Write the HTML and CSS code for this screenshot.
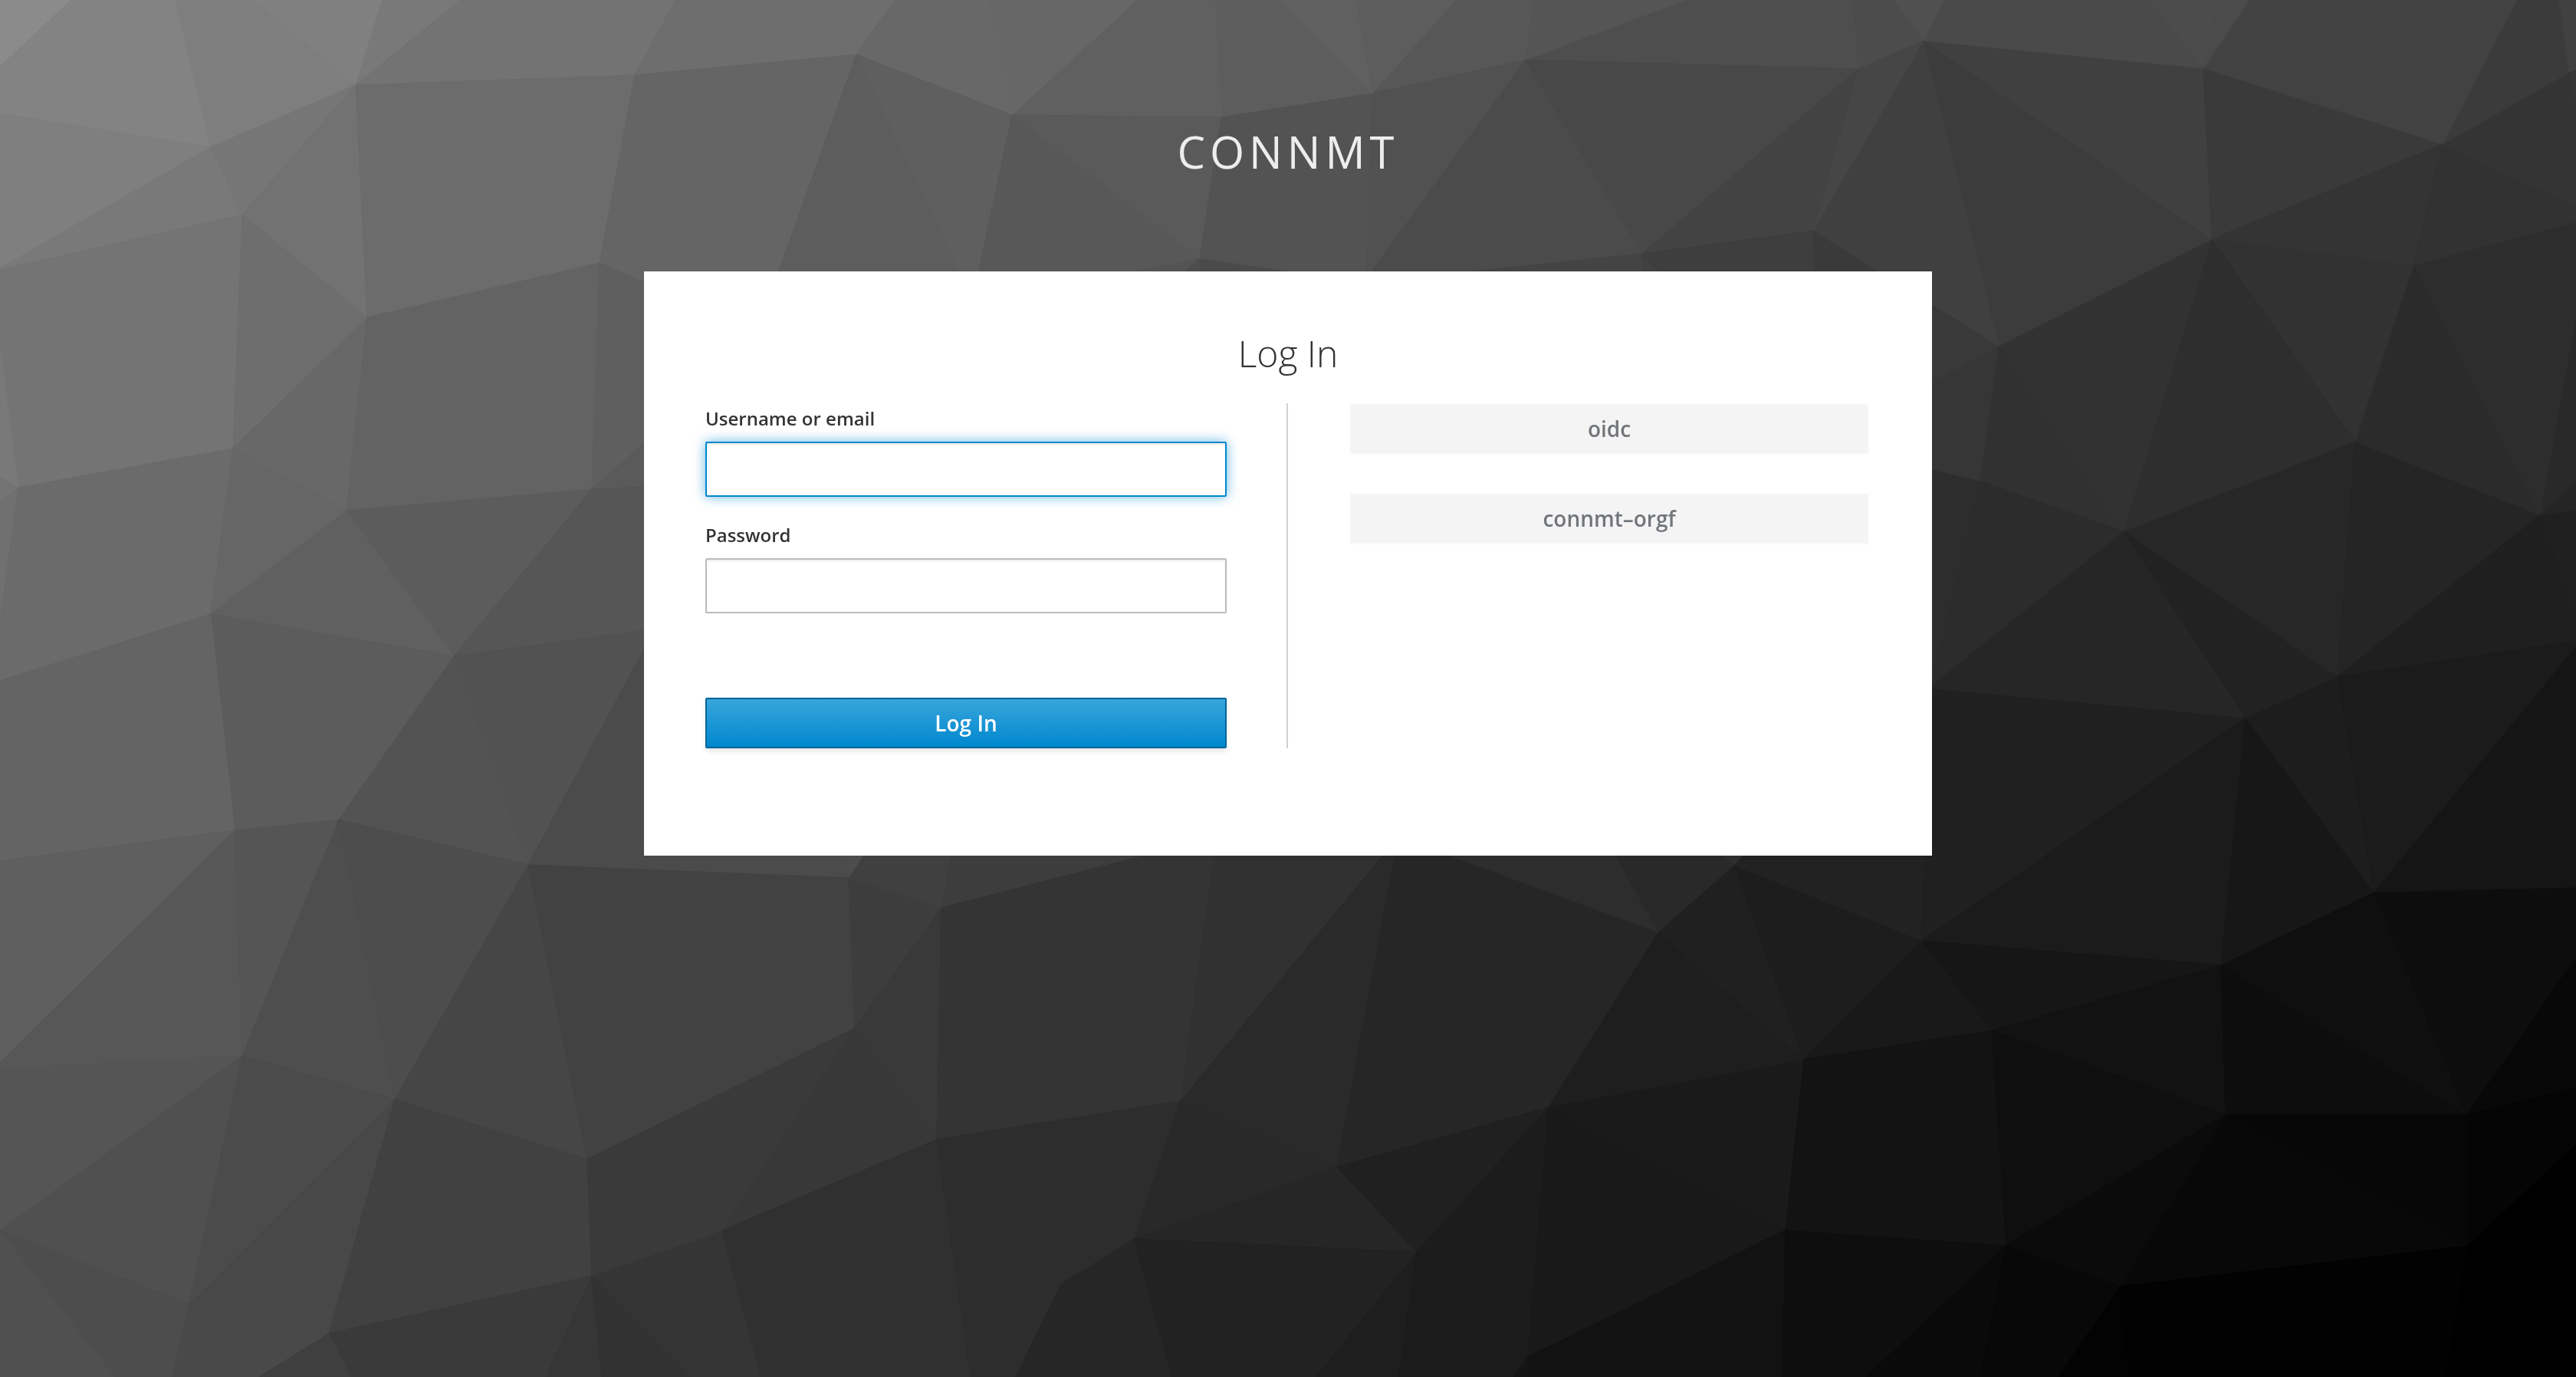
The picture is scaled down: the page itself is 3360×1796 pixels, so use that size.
FILE: index.html
```html
<!DOCTYPE html>
<html lang="en">
<head>
<meta charset="utf-8">
<meta name="viewport" content="width=device-width, initial-scale=1">
<title>Log in to CONNMT</title>
<link rel="stylesheet" href="styles.css">
</head>
<body>
<svg class="backdrop" viewBox="0 0 3360 1796" preserveAspectRatio="xMidYMid slice" aria-hidden="true"></svg>
<div class="page">
  <header class="brand">CONNMT</header>
  <main class="card">
    <h1 class="card-title">Log In</h1>
    <div class="columns">
      <form class="login" action="#" method="post">
        <div class="field">
          <label class="label" for="username">Username or email</label>
          <input class="input" id="username" name="username" type="text" autocomplete="off">
        </div>
        <div class="field">
          <label class="label" for="password">Password</label>
          <input class="input" id="password" name="password" type="password" autocomplete="off">
        </div>
        <button class="submit" type="submit">Log In</button>
      </form>
      <ul class="providers">
        <li><a class="provider" href="#oidc">oidc</a></li>
        <li><a class="provider" href="#connmt-orgf">connmt–orgf</a></li>
      </ul>
    </div>
  </main>
</div>
<script src="backdrop.js"></script>
</body>
</html>
```
FILE: backdrop.js
```js
// Low-poly backdrop: each facet is a grey level followed by its corner points.
const facets = `
8b 0,0 93,0 0,87
83 93,0 229,0 275,192 0,148 0,87
7e 229,0 330,0 464,111 275,192
80 330,0 499,0 464,111
79 499,0 601,0 464,111
73 601,0 881,0 828,98 464,111
7f 0,148 275,192 0,350
79 0,350 275,192 316,280 0,352
76 275,192 464,111 316,280
72 464,111 479,414 316,280
74 0,352 316,280 304,585 24,636 0,450
6e 316,280 479,414 304,585
6c 464,111 828,98 782,343 479,414
79 0,450 24,636 0,622
74 0,622 24,636 0,656
70 0,656 24,636 0,810
6b 24,636 304,585 275,801 0,888 0,810
68 304,585 479,414 452,666
66 304,585 452,666 275,801
63 479,414 782,343 772,638 452,666
5c 452,666 772,638 592,856
60 275,801 452,666 592,856
5c 275,801 592,856 442,1069 306,1083
64 0,888 275,801 306,1083 0,1123
6e 881,0 1167,0 1117,71 828,98
65 828,98 1117,71 1015,356 842,369 782,343
5f 782,343 842,369 842,576 772,638
5a 772,638 842,576 842,635
56 772,638 842,635 842,822 592,856
52 592,856 842,822 842,843 689,1128
53 442,1069 592,856 689,1128
4b 689,1128 842,843 1104,1113 1107,1145
4d 1107,1145 1104,1113 1129,1113
5f 0,1123 306,1083 0,1386
57 0,1386 306,1083 316,1377 0,1395
55 306,1083 442,1069 316,1377
55 0,1395 316,1377 0,1605
4e 442,1069 515,1434 316,1377
4d 442,1069 689,1128 515,1434
50 0,1605 316,1377 247,1701
4b 316,1377 515,1434 247,1701
46 689,1128 766,1512 515,1434
4d 0,1605 247,1701 225,1796 150,1796
50 0,1605 150,1796 0,1796
48 247,1701 515,1434 429,1739
49 247,1701 429,1739 338,1796 225,1796
41 515,1434 766,1512 772,1664 429,1739
3a 429,1739 772,1664 712,1796 458,1796
3f 429,1739 458,1796 338,1796
36 772,1664 785,1796 712,1796
32 772,1664 903,1796 785,1796
35 772,1664 942,1605 993,1796 903,1796
42 689,1128 1107,1145 1115,1341 766,1512
3a 766,1512 1115,1341 942,1605 772,1664
3d 1107,1145 1228,1184 1115,1341
40 1107,1145 1129,1113 1241,1113 1228,1184
3d 1228,1184 1241,1113 1504,1113
39 1115,1341 1228,1184 1222,1486
38 1115,1341 1222,1486 942,1605
34 1228,1184 1504,1113 1584,1113 1540,1436 1222,1486
31 1540,1436 1584,1113 1806,1113
30 942,1605 1222,1486 1266,1796 993,1796
2d 1222,1486 1540,1436 1479,1616 1384,1675 1325,1796 1266,1796
26 1384,1675 1479,1616 1529,1796 1325,1796
2a 1540,1436 1806,1113 1820,1113 1744,1522
29 1540,1436 1744,1522 1479,1616
26 1744,1522 1820,1113 1882,1113 2163,1216 2020,1444
2d 1882,1113 2106,1113 2163,1216
29 2106,1113 2246,1113 2262,1129 2163,1216
2e 2246,1113 2277,1113 2262,1129
26 1479,1616 1744,1522 1848,1633
22 1479,1616 1848,1633 1717,1796 1529,1796
20 1744,1522 2020,1444 1848,1633
1e 1848,1633 1825,1796 1717,1796
1b 1848,1633 1993,1770 1974,1796 1825,1796
1c 2020,1444 1993,1770 1848,1633
19 2020,1444 2329,1604 1993,1770
1a 2020,1444 2353,1382 2329,1604
1e 2020,1444 2163,1216 2353,1382
20 2163,1216 2262,1129 2353,1382
1d 2262,1129 2507,1227 2353,1382
22 2262,1129 2277,1113 2509,1113 2507,1227
12 1993,1770 2329,1604 2325,1796 1992,1796
15 1993,1770 1992,1796 1974,1796
0e 2329,1604 2617,1624 2434,1796 2325,1796
19 2353,1382 2507,1227 2598,1344
13 2353,1382 2598,1344 2617,1624 2329,1604
20 2507,1227 2509,1113 2518,898 2929,936
1b 2507,1227 2929,936 2897,1259
16 2507,1227 2897,1259 2598,1344
17 2929,936 3097,1164 2897,1259
12 2598,1344 2897,1259 2903,1454
0f 2598,1344 2903,1454 2617,1624
0d 2897,1259 3218,1454 2903,1454
0f 2897,1259 3097,1164 3218,1454
0d 3097,1164 3360,1157 3360,1249 3218,1454
08 3218,1454 3360,1249 3360,1418
05 3218,1454 3360,1418 3360,1493 3218,1625
00 3218,1625 3360,1493 3360,1796 3190,1796
07 2903,1454 3218,1454 3218,1625
08 2903,1454 3218,1625 2765,1678
0b 2617,1624 2903,1454 2765,1678
0a 2617,1624 2584,1796 2434,1796
08 2617,1624 2765,1678 2685,1796 2584,1796
03 2765,1678 2778,1796 2685,1796
02 2765,1678 3218,1625 3190,1796 2778,1796
1d 2929,936 3049,882 3097,1164
1b 3049,882 3360,835 3360,844 3097,1164
15 3097,1164 3360,844 3360,1157
26 2518,898 2518,893 2770,693 2929,936
22 2770,693 3049,882 2929,936
27 2770,693 3072,576 3049,882
25 3072,576 3313,672 3049,882
1f 3049,882 3313,672 3360,801 3360,835
20 3313,672 3360,665 3360,801
25 3313,672 3360,626 3360,665
29 3313,672 3360,414 3360,626
2d 3148,346 3360,290 3360,414 3313,672
2b 3148,346 3313,672 3072,576
32 2885,312 3148,346 3072,576
2e 2885,312 3072,576 2770,693
32 2607,451 2885,312 2770,693
31 2607,451 2770,693 2582,627
2c 2582,627 2770,693 2520,893
2d 2518,612 2582,627 2520,893 2518,893
36 2518,501 2607,451 2582,627 2518,612
39 2518,398 2607,451 2518,501
3c 2509,53 2885,312 2607,451
40 2365,301 2509,53 2607,451
40 2509,53 2874,89 2885,312
3a 2874,89 3186,188 2885,312
34 2885,312 3186,188 3148,346
32 3186,188 3360,271 3360,290 3148,346
34 3186,188 3351,95 3360,138 3360,271
3b 3186,188 3283,0 3338,0 3351,95
41 3338,0 3360,0 3360,92 3351,95
37 3351,95 3360,92 3360,138
42 2874,89 2934,0 3283,0 3186,188
4b 2874,89 2895,0 2934,0
4c 2874,89 2801,0 2895,0
4a 2509,53 2535,0 2801,0 2874,89
50 2509,53 2469,0 2535,0
4c 2424,90 2417,0 2469,0 2509,53
4e 1990,78 2199,0 2417,0 2424,90
55 1990,78 2000,0 2199,0
57 1790,122 1899,0 2000,0 1990,78
5d 1790,122 1768,0 1899,0
60 1790,122 1667,0 1768,0
5d 1593,153 1585,0 1667,0 1790,122
60 1320,150 1483,0 1585,0 1593,153
67 1320,150 1290,0 1483,0
68 1117,71 1167,0 1290,0 1320,150
5d 1117,71 1252,356 1015,356
5f 1117,71 1320,150 1276,356 1252,356
58 1320,150 1565,337 1470,356 1276,356
5a 1320,150 1593,153 1565,337
54 1565,337 1543,356 1470,356
4d 1565,337 1565,356 1543,356
4a 1565,337 1700,356 1565,356
53 1593,153 1790,122 1783,356 1700,356 1565,337
51 1790,122 1990,78 1788,356 1783,356
4b 1990,78 2142,331 1900,356 1788,356
48 1990,78 2424,90 2142,331
43 2424,90 2365,301 2142,331
44 2142,331 2143,356 1900,356
41 2142,331 2166,356 2143,356
3e 2142,331 2365,301 2368,356 2166,356
3a 2365,301 2450,356 2368,356
46 2424,90 2509,53 2365,301
`;

const backdrop = document.querySelector('.backdrop');
for (const line of facets.trim().split('\n')) {
  const [level, ...points] = line.split(' ');
  const facet = document.createElementNS('http://www.w3.org/2000/svg', 'polygon');
  const grey = '#' + level.repeat(3);
  facet.setAttribute('points', points.join(' '));
  facet.setAttribute('fill', grey);
  facet.setAttribute('stroke', grey);
  backdrop.append(facet);
}
document.getElementById('username').focus();
```
FILE: styles.css
```css
* {
  box-sizing: border-box;
}

body {
  margin: 0;
  min-height: 100vh;
  background: #3a3a3a;
  color: #333;
  font-family: "Open Sans", "Noto Sans", sans-serif;
  font-size: 24px;
}

.backdrop {
  position: fixed;
  inset: 0;
  z-index: -1;
  width: 100%;
  height: 100%;
}

.page {
  display: flex;
  flex-direction: column;
  align-items: center;
}

.brand {
  padding: 140px 40px 98px;
  color: #ededed;
  font-size: 58px;
  line-height: 116px;
  letter-spacing: 6px;
  text-align: center;
}

.card {
  width: 100%;
  max-width: 1680px;
  padding: 80px 80px 140px;
  background: #fff;
}

.card-title {
  margin: 0 0 38px;
  font-size: 48px;
  font-weight: 300;
  line-height: 54px;
  text-align: center;
}

.columns {
  display: grid;
  grid-template-columns: 1fr 1fr;
}

.login {
  display: flex;
  flex-direction: column;
  padding-right: 78px;
  border-right: 2px solid #d1d1d1;
}

.field {
  display: flex;
  flex-direction: column;
  gap: 10px;
  margin-bottom: 30px;
}

.label {
  font-size: 24px;
  font-weight: 600;
  line-height: 40px;
}

.input {
  width: 100%;
  height: 72px;
  padding: 4px 20px;
  border: 2px solid #bbb;
  border-radius: 2px;
  background: #fff;
  box-shadow: inset 0 2px 2px rgba(3, 3, 3, 0.075);
  color: #333;
  font: inherit;
  font-size: 28px;
}

.input:focus {
  border-color: #0088ce;
  outline: 0;
  box-shadow: inset 0 2px 2px rgba(0, 0, 0, 0.075), 0 0 16px rgba(0, 136, 206, 0.6);
}

.submit {
  height: 66px;
  margin-top: 80px;
  border: 2px solid #00659c;
  border-radius: 2px;
  background: linear-gradient(#39a5dc, #0088ce);
  box-shadow: 0 4px 6px rgba(3, 3, 3, 0.1);
  color: #fff;
  font: inherit;
  font-size: 28px;
  font-weight: 600;
}

.providers {
  display: flex;
  flex-direction: column;
  gap: 50px;
  margin: 0;
  padding: 0 2px 0 80px;
  list-style: none;
}

.provider {
  display: block;
  border: 2px solid #fafafa;
  background: #f4f4f4;
  background-clip: padding-box;
  color: #72767b;
  font-size: 28px;
  font-weight: 600;
  line-height: 63px;
  text-align: center;
  text-decoration: none;
}
```
